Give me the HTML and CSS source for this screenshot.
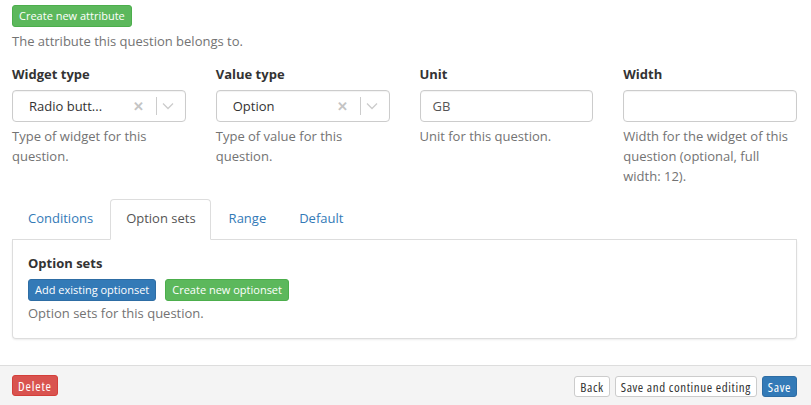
FILE: index.html
```html
<!DOCTYPE html>
<html>
<head>
<meta charset="utf-8">
<link rel="stylesheet" href="styles.css">
</head>
<body>
<div class="content">
  <div class="top">
    <button class="btn btn-xs btn-success">Create new attribute</button>
    <p class="help">The attribute this question belongs to.</p>
  </div>
  <div class="row">
    <div class="col">
      <label class="lbl">Widget type</label>
      <div class="select">
        <span class="sel-value">Radio butt...</span>
        <span class="sel-clear">&#x2715;</span>
        <span class="sel-sep"></span>
        <svg class="sel-arrow" width="12" height="8" viewBox="0 0 12 8"><path d="M1 1.5 L6 6.5 L11 1.5" fill="none" stroke="#ccc" stroke-width="1.3"/></svg>
      </div>
      <p class="help">Type of widget for this question.</p>
    </div>
    <div class="col">
      <label class="lbl">Value type</label>
      <div class="select">
        <span class="sel-value">Option</span>
        <span class="sel-clear">&#x2715;</span>
        <span class="sel-sep"></span>
        <svg class="sel-arrow" width="12" height="8" viewBox="0 0 12 8"><path d="M1 1.5 L6 6.5 L11 1.5" fill="none" stroke="#ccc" stroke-width="1.3"/></svg>
      </div>
      <p class="help">Type of value for this question.</p>
    </div>
    <div class="col">
      <label class="lbl">Unit</label>
      <div class="input">GB</div>
      <p class="help">Unit for this question.</p>
    </div>
    <div class="col">
      <label class="lbl">Width</label>
      <div class="input"></div>
      <p class="help">Width for the widget of this question (optional, full width: 12).</p>
    </div>
  </div>
  <ul class="tabs">
    <li class="tab">Conditions</li>
    <li class="tab active">Option sets</li>
    <li class="tab">Range</li>
    <li class="tab">Default</li>
  </ul>
  <div class="panel">
    <label class="lbl">Option sets</label>
    <div class="btns">
      <button class="btn btn-xs btn-primary">Add existing optionset</button>
      <button class="btn btn-xs btn-success">Create new optionset</button>
    </div>
    <p class="help">Option sets for this question.</p>
  </div>
</div>
<div class="footer">
  <button class="btn btn-sm btn-danger">Delete</button>
  <div class="footer-right">
    <button class="btn btn-sm btn-default">Back</button>
    <button class="btn btn-sm btn-default">Save and continue editing</button>
    <button class="btn btn-sm btn-primary">Save</button>
  </div>
</div>
</body>
</html>
```
FILE: styles.css
```css
* { box-sizing: border-box; }
html, body { margin: 0; padding: 0; background: #fff; }
body {
  font-family: "Open Sans", "Liberation Sans", sans-serif;
  font-size: 13px;
  line-height: 20px;
  color: #333;
}
p { margin: 0; }
.content { padding: 5px 14px 0 12px; }
.top .help { margin-top: 4px; }
.help { color: #737373; font-size: 13px; line-height: 20px; }
.btn {
  font-family: "Open Sans", "Liberation Sans", sans-serif;
  border: 1px solid transparent;
  border-radius: 3px;
  cursor: pointer;
  display: inline-block;
}
.btn-xs { font-size: 11px; line-height: 16px; padding: 2px 6px; height: 22px; }
.btn-success { background: #5cb85c; border-color: #4cae4c; color: #fff; }
.btn-primary { background: #337ab7; border-color: #2e6da4; color: #fff; }
.btn-danger { background: #d9534f; border-color: #d43f3a; color: #fff; }
.btn-default { background: #fff; border-color: #ccc; color: #333; }
.row { display: grid; grid-template-columns: repeat(4, 1fr); column-gap: 30px; margin-top: 13px; }
.lbl { display: block; font-weight: 700; font-size: 13px; line-height: 20px; margin-bottom: 6px; }
.select, .input {
  height: 32px;
  border: 1px solid #ccc;
  border-radius: 4px;
  display: flex;
  align-items: center;
  margin-bottom: 4px;
  box-shadow: inset 0 1px 1px rgba(0,0,0,.05);
}
.input { padding-left: 12px; color: #555; }
.sel-value { flex: 1; padding-left: 16px; color: #333; }
.sel-clear { color: #c4c4c4; font-size: 13px; font-weight: 700; width: 18px; text-align: center; margin-right: 8px; }
.sel-sep { width: 1px; height: 18px; background: #ccc; }
.sel-arrow { margin: 0 11px 0 5px; }
.tabs {
  list-style: none;
  margin: 13px 0 0 0;
  padding: 0;
  display: flex;
  border-bottom: 1px solid #ddd;
  position: relative;
  z-index: 1;
}
.tab {
  padding: 9px 14px 11px 15px;
  line-height: 19px;
  color: #337ab7;
  border: 1px solid transparent;
  border-radius: 4px 4px 0 0;
  margin-bottom: -1px;
  margin-right: 2px;
}
.tab.active { color: #555; background: #fff; border-color: #ddd; border-bottom-color: #fff; }
.panel {
  border: 1px solid #ddd;
  border-top: none;
  border-radius: 0 0 4px 4px;
  padding: 13px 15px 14px 15px;
  box-shadow: 0 1px 2px rgba(0,0,0,.08);
  height: 99px;
}
.panel .lbl { margin-bottom: 6px; }
.btns { display: flex; gap: 10px; margin-bottom: 2px; }
.btns .btn-success { margin-left: -1px; }
.footer {
  margin-top: 26px;
  border-top: 1px solid #ddd;
  background: #f4f4f4;
  display: flex;
  justify-content: space-between;
  align-items: flex-start;
  padding: 9px 14px 9px 12px;
  height: 40px;
}
.footer-right { display: flex; gap: 5px; padding-top: 1px; }
.btn-sm { font-size: 13px; font-stretch: 75%; letter-spacing: 0.6px; line-height: 18px; padding: 0 5px; height: 21px; }
.btn-sm.btn-danger { letter-spacing: 0.85px; }
```
